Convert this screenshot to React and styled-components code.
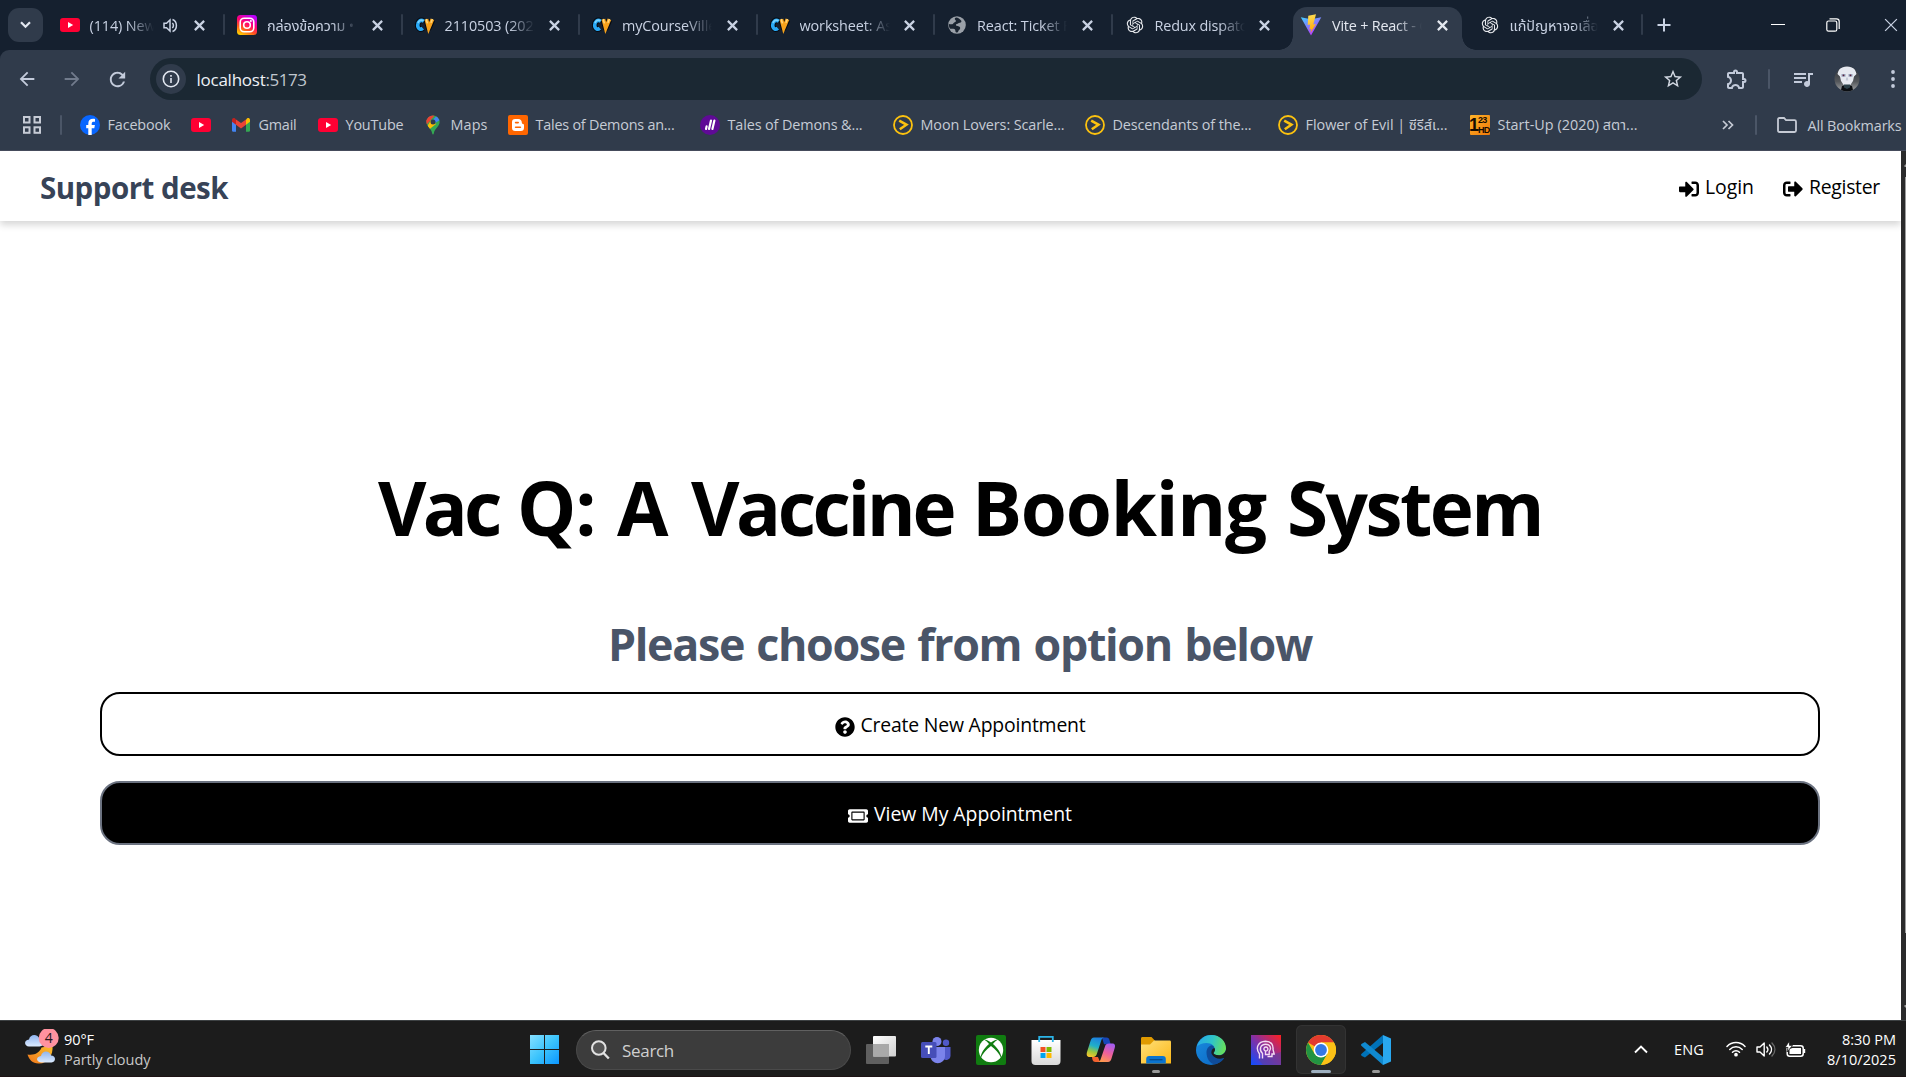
import React, { useLayoutEffect, useRef, useState } from "react";
import styled, { createGlobalStyle, css } from "styled-components";
import { FaSignInAlt, FaSignOutAlt, FaQuestionCircle, FaTicketAlt } from "react-icons/fa";
import { RiOpenaiFill } from "react-icons/ri";
import { MdQueueMusic, MdOutlineExtension, MdStarBorder, MdRefresh, MdArrowBack, MdArrowForward } from "react-icons/md";

const GlobalStyle = createGlobalStyle`
  * { box-sizing: border-box; }
  html, body { margin: 0; padding: 0; overflow: hidden; }
  body {
    font-family: "Segoe UI", "Open Sans", "Noto Sans", "Noto Sans Thai", sans-serif;
    background: #fff;
  }
  svg { display: block; flex: none; }
`;

const Screen = styled.div`
  width: 1906px;
  height: 1077px;
  display: flex;
  flex-direction: column;
  overflow: hidden;
`;

/* ---------- text that spreads to a known width ---------- */

const FitSpan = styled.span`
  display: inline-block;
  white-space: pre;
  flex: none;
`;

function Fit({ width, children, className }) {
  const ref = useRef(null);
  const [spacing, setSpacing] = useState(0);
  useLayoutEffect(() => {
    const natural = ref.current.getBoundingClientRect().width;
    setSpacing((width - natural) / String(children).length);
  }, [width, children]);
  return (
    <FitSpan ref={ref} className={className} style={{ letterSpacing: `${spacing}px` }}>
      {children}
    </FitSpan>
  );
}

/* ---------- tab strip ---------- */

const TabStrip = styled.div`
  height: 50px;
  flex: none;
  display: flex;
  align-items: stretch;
  background: #15202f;
  color: #c9d2e3;
`;

const TabSearch = styled.div`
  width: 35px;
  height: 34px;
  margin: 8px 3.5px 0 8px;
  border-radius: 11px;
  background: #303b4b;
  display: flex;
  align-items: center;
  justify-content: center;
`;

const TabBox = styled.div`
  position: relative;
  width: ${(p) => (p.$last ? 175.5 : 177.5)}px;
  flex: none;
  padding-left: 13px;
  display: flex;
  align-items: center;
  isolation: isolate;
  ${(p) =>
    p.$line &&
    css`
      &::after {
        content: "";
        position: absolute;
        right: -1px;
        top: 14px;
        width: 2px;
        height: 21px;
        border-radius: 1px;
        background: #303b4b;
      }
    `}
  ${(p) =>
    p.$active &&
    css`
      padding-left: 12px;
      color: #e4e8f0;
    `}
`;

const ActiveShape = styled.div`
  position: absolute;
  z-index: -1;
  left: 3.5px;
  right: 4.5px;
  top: 7px;
  bottom: 0;
  border-radius: 14px 14px 0 0;
  background: #303b4b;
  &::before,
  &::after {
    content: "";
    position: absolute;
    bottom: 0;
    width: 14px;
    height: 14px;
  }
  &::before {
    left: -14px;
    background: radial-gradient(circle at 0 0, transparent 13.5px, #303b4b 14px);
  }
  &::after {
    right: -14px;
    background: radial-gradient(circle at 100% 0, transparent 13.5px, #303b4b 14px);
  }
`;

const IconSlot = styled.span`
  width: 20px;
  height: 20px;
  flex: none;
  display: flex;
  align-items: center;
  justify-content: center;
`;

const TabTitle = styled.span`
  width: ${(p) => p.$w}px;
  margin-left: ${(p) => (p.$active ? 11 : 10)}px;
  padding-top: 1px;
  flex: none;
  overflow: hidden;
  white-space: nowrap;
  font-size: 14.4px;
  line-height: 26px;
  letter-spacing: ${(p) => p.$ls || 0}px;
  mask-image: linear-gradient(90deg, #000 calc(100% - 26px), transparent);
`;

const TabClose = styled.span`
  width: 16px;
  margin-left: 12px;
  display: flex;
  justify-content: center;
`;

const NewTab = styled.div`
  width: 44px;
  display: flex;
  align-items: center;
  justify-content: center;
`;

const WindowButtons = styled.div`
  margin-left: auto;
  padding-right: 8px;
  display: flex;
  align-items: center;
`;

/* ---------- toolbar ---------- */

const Chrome = styled.div`
  height: 101px;
  flex: none;
  background: #15202f;
`;

const ChromePanel = styled.div`
  height: 101px;
  border-radius: 9px 0 0 0;
  background: #303b4b;
  border-bottom: 1px solid #454b5b;
`;

const Toolbar = styled.div`
  height: 58px;
  display: flex;
  align-items: center;
  color: #c3cbdb;
`;

const NavButton = styled.span`
  width: 45px;
  display: flex;
  justify-content: center;
  color: ${(p) => (p.$dim ? "#717b8c" : "#c3cbdb")};
`;

const Omnibox = styled.div`
  width: 1552px;
  height: 42px;
  margin-left: 10.5px;
  padding: 0 18px 0 6px;
  border-radius: 21px;
  background: #1b2833;
  display: flex;
  align-items: center;
`;

const InfoDot = styled.span`
  width: 30px;
  height: 30px;
  border-radius: 50%;
  background: #303b4b;
  display: flex;
  align-items: center;
  justify-content: center;
`;

const Url = styled.div`
  margin-left: 10.5px;
  padding-top: 1px;
  flex: 1;
  display: flex;
  font-size: 17px;
  line-height: 28px;
  color: #c0c7cf;
`;

const UrlHost = styled(Fit)`
  color: #eef1f6;
`;

const Gap = styled.span`
  width: ${(p) => p.$w}px;
  flex: none;
`;

const Rule = styled.span`
  width: 2px;
  height: 20px;
  flex: none;
  border-radius: 1px;
  background: #4b5667;
`;

/* ---------- bookmarks ---------- */

const Bookmarks = styled.div`
  height: 34px;
  padding-left: 22px;
  display: flex;
  align-items: center;
  color: #c6cbd5;
  font-size: 14.4px;
`;

const Bookmark = styled.div`
  width: ${(p) => p.$w}px;
  flex: none;
  display: flex;
  align-items: center;
  gap: 7.5px;
  line-height: 26px;
`;

/* ---------- web page ---------- */

const Viewport = styled.div`
  height: 869px;
  flex: none;
  display: flex;
`;

const Page = styled.div`
  width: 1901px;
  flex: none;
  display: flex;
  flex-direction: column;
  background: #fff;
  overflow: hidden;
`;

const ScrollTrack = styled.div`
  width: 5px;
  flex: none;
  padding-left: 3px;
  display: flex;
  flex-direction: column;
  background: #2b2b2c;
  overflow: hidden;
`;

const ScrollArrow = styled.div`
  height: ${(p) => p.$h}px;
  padding-top: ${(p) => p.$top}px;
`;

const ScrollThumb = styled.div`
  height: 756px;
  margin-left: 1px;
  background: #9d9d9d;
`;

const SiteHeader = styled.header`
  height: 70px;
  flex: none;
  padding: 0 21px 0 40px;
  display: flex;
  align-items: center;
  justify-content: space-between;
  box-shadow: 0 4px 7px rgba(0, 0, 0, 0.16);
`;

const Brand = styled(Fit)`
  font-size: 29.5px;
  font-weight: 700;
  line-height: 40px;
  color: #374357;
  padding-top: 3px;
`;

const Nav = styled.nav`
  display: flex;
  gap: 29px;
  color: #000;
`;

const NavLink = styled.a`
  display: flex;
  align-items: center;
  gap: 6px;
  font-size: 19.4px;
  line-height: 30px;
  padding-top: 2px;
  svg {
    margin-top: 4px;
  }
`;

const Hero = styled.main`
  flex: 1;
  padding: 238px 81px 0 100px;
  display: flex;
  flex-direction: column;
  align-items: center;
`;

const Title = styled.h1`
  margin: 0;
  display: flex;
  font-size: 74.6px;
  line-height: 96px;
  font-weight: 700;
  word-spacing: 3px;
  color: #000;
  height: 96px;
`;

const Subtitle = styled.h2`
  margin: 59px 0 0;
  height: 60px;
  font-size: 44.8px;
  line-height: 60px;
  font-weight: 700;
  word-spacing: 2px;
  color: #4a5568;
`;

const ActionButton = styled.button`
  width: 1720px;
  height: 64px;
  flex: none;
  margin: ${(p) => p.$top}px 0 0;
  padding: 2px 0 0;
  border: 2px solid ${(p) => (p.$solid ? "#6b7280" : "#000")};
  border-radius: 20px;
  background: ${(p) => (p.$solid ? "#000" : "#fff")};
  color: ${(p) => (p.$solid ? "#fff" : "#000")};
  font-family: inherit;
  font-size: 19.4px;
  line-height: 30px;
  display: flex;
  align-items: center;
  justify-content: center;
  gap: 6px;
  svg {
    margin-top: 3px;
  }
`;

/* ---------- taskbar ---------- */

const Taskbar = styled.div`
  height: 57px;
  flex: none;
  border-top: 1px solid #3d4143;
  border-bottom: 1px solid #1d1214;
  background: #1c1c1c;
  color: #fff;
  display: flex;
  align-items: stretch;
`;

const Weather = styled.div`
  width: 530px;
  padding: 8px 0 0 24px;
  display: flex;
  gap: 5px;
`;

const TwoLines = styled.div`
  display: flex;
  flex-direction: column;
  align-items: ${(p) => (p.$end ? "flex-end" : "flex-start")};
  font-size: 14.5px;
  line-height: 20px;
  padding-top: 1px;
`;

const Muted = styled(Fit)`
  color: #c8c8c8;
`;

const StartSlot = styled.div`
  width: 46px;
  padding-top: 2px;
  display: flex;
  align-items: center;
`;

const SearchBox = styled.div`
  width: 275px;
  height: 40px;
  margin: 9px 15px 0 0;
  padding-left: 14px;
  border-radius: 20px;
  border: 1px solid #4a4a4a;
  border-top-color: #606060;
  background: #3c3c3c;
  color: #d0d0d0;
  display: flex;
  align-items: center;
  gap: 12px;
  font-size: 17px;
`;

const Apps = styled.div`
  display: flex;
  gap: 5px;
  margin-left: -10px;
`;

const AppSlot = styled.div`
  width: 50px;
  height: 49px;
  margin-top: 4px;
  padding-top: 10px;
  border-radius: 6px;
  display: flex;
  flex-direction: column;
  align-items: center;
  gap: 5px;
  ${(p) =>
    p.$active &&
    css`
      background: #292929;
      box-shadow: inset 0 0 0 1px #333;
    `}
`;

const RunMark = styled.span`
  width: ${(p) => (p.$wide ? 20 : 8)}px;
  height: 3px;
  border-radius: 2px;
  background: ${(p) => (p.$wide ? "#9fb0c0" : "#989898")};
`;

const Tray = styled.div`
  margin-left: auto;
  padding: 1px 10px 0 0;
  display: flex;
  align-items: center;
  font-size: 14.5px;
`;

/* ---------- drawings ---------- */

const Cross = ({ s = 10, w = 2 }) => (
  <svg width={s} height={s} viewBox="0 0 10 10" stroke="currentColor" strokeWidth={w} fill="none">
    <path d="M.8.8 9.2 9.2M9.2.8.8 9.2" />
  </svg>
);

const YouTube = () => (
  <svg width="20" height="20" viewBox="0 0 20 20">
    <rect y="3" width="20" height="14" rx="3" fill="#ff0033" />
    <path d="M8 7v6l5.2-3z" fill="#fff" />
  </svg>
);

const Instagram = () => (
  <svg width="20" height="20" viewBox="0 0 20 20">
    <defs>
      <linearGradient id="ig" x1=".2" y1="1" x2=".7" y2="0">
        <stop offset="0" stopColor="#ffd000" />
        <stop offset=".3" stopColor="#ff5b1a" />
        <stop offset=".6" stopColor="#ff0076" />
        <stop offset="1" stopColor="#b800ff" />
      </linearGradient>
    </defs>
    <rect width="20" height="20" rx="3.5" fill="url(#ig)" />
    <g fill="none" stroke="#fff" strokeWidth="1.6">
      <rect x="3.2" y="3.2" width="13.6" height="13.6" rx="4" />
      <circle cx="10" cy="10" r="3.3" />
    </g>
    <circle cx="13.9" cy="6.1" r="1" fill="#fff" />
  </svg>
);

const CourseVille = () => (
  <svg width="20" height="20" viewBox="0 0 20 20" fill="none">
    <g stroke="#05090f" strokeWidth="5.6" strokeLinejoin="round">
      <path d="M8.8 6.2C5.4 3.8 2.6 7 2.7 10.3c.1 3.6 3 4.8 5.1 2.8" />
      <path d="m11.4 5 2.3 8.3L17.4 5" />
    </g>
    <path d="M8.8 6.2C5.4 3.8 2.6 7 2.7 10.3c.1 3.6 3 4.8 5.1 2.8" stroke="#29a8f5" strokeWidth="3.6" />
    <path d="M8.5 5.9C5.6 4.1 3.8 5.8 3 8" stroke="#7ad4ff" strokeWidth="1.6" />
    <path d="m11.4 4.2 2.3 8.8 3.7-8.8" stroke="#f6a21c" strokeWidth="3.8" />
    <path d="m11.2 4 1.2 4.4M17.4 4l-1.5 3.8" stroke="#ffd67a" strokeWidth="1.6" />
  </svg>
);

const Globe = () => (
  <svg width="20" height="20" viewBox="0 0 20 20">
    <circle cx="10" cy="10" r="8.8" fill="#9aa0a8" />
    <path
      d="M9.2 2.4c-2 .6-1.6 2-.6 2.8.8.6.2 1.8-1.4 2.2-1 .3-.8 1.6-2 1.8-1 .2-2.2 0-3.4-.2 0 2 .4 3.4 1.3 4.7 1 .2 2.7-.3 4.2.3 1.4.6.8 2 1.4 2.9.8 1 2.3.5 2.6-.7.4-1.6 1.9-1.7 1.9-3.3 0-1.8-2-1.6-3.6-2.2-1-.4-.8-1.6.2-1.8 1.5-.3 1.6-1.2 3-1.2 1.5 0 1.8-1 1.5-1.9-1.5-2-3.2-3.2-5.1-3.4z"
      fill="#1a2431"
    />
  </svg>
);

const Vite = () => (
  <svg width="22" height="22" viewBox="0 0 22 22">
    <defs>
      <linearGradient id="va" x1="0" y1="0" x2=".6" y2="1">
        <stop offset="0" stopColor="#41d1ff" />
        <stop offset="1" stopColor="#bd34fe" />
      </linearGradient>
      <linearGradient id="vb" x1=".4" y1="0" x2=".6" y2="1">
        <stop offset="0" stopColor="#ffdf55" />
        <stop offset="1" stopColor="#ffa000" />
      </linearGradient>
    </defs>
    <path d="M.8 3.2 11 21.5 21.300 3.200 11 5.200z" fill="url(#va)" />
    <path d="M16 .3 8.300 1.700l-.6 9.200 2.500-.4-.8 5 1.900-.4-.9 4 5.600-9-2.700.4z" fill="url(#vb)" />
  </svg>
);

const Speaker = () => (
  <svg width="15" height="15" viewBox="0 0 15 15" fill="none" stroke="currentColor" strokeWidth="1.5">
    <path d="M1 5.2h2.5L7 2v11L3.5 9.8H1z" />
    <path d="M9.3 5c1.5 1.3 1.5 3.7 0 5M9.5 1.5c5.2 2 5.2 10 0 12" />
  </svg>
);

const Facebook = () => (
  <svg width="20" height="20" viewBox="0 0 20 20">
    <circle cx="10" cy="10" r="10" fill="#0866ff" />
    <path d="M8.3 19.9v-6.7H6.2V10h2.1V8.7c0-3.4 1.6-5 4.9-5 .6 0 1.4.1 1.8.2v2.8h-1.1c-1.6 0-2.2.6-2.2 2.2V10h3.2l-.6 3.2h-2.6v6.7a10 10 0 0 1-3.4 0z" fill="#fff" />
  </svg>
);

const Gmail = () => (
  <svg width="20" height="20" viewBox="0 0 20 20">
    <path d="M1 5v10.5c0 .8.5 1.2 1.2 1.2H5V8z" fill="#4285f4" />
    <path d="M19 5v10.5c0 .8-.5 1.2-1.2 1.2H15V8z" fill="#34a853" />
    <path d="M15 4.5V9.8l4-3V5c0-1.8-1.9-2.4-3-1.6z" fill="#fbbc04" />
    <path d="M5 9.8V4.4l5 3.7 5-3.7v5.4l-5 3.8z" fill="#ea4335" />
    <path d="M1 5v1.8l4 3V4.4L4 3.5C2.5 2.5 1 3.5 1 5z" fill="#c5221f" />
  </svg>
);

const Maps = () => (
  <svg width="20" height="20" viewBox="0 0 20 20">
    <defs>
      <clipPath id="pin">
        <path d="M10 .5a6.6 6.6 0 0 0-6.6 6.6c0 4.7 4.9 6.1 5.8 11.4.2 1.3 1.4 1.3 1.6 0 .9-5.3 5.8-6.7 5.8-11.4A6.6 6.6 0 0 0 10 .5z" />
      </clipPath>
    </defs>
    <g clipPath="url(#pin)">
      <rect width="20" height="20" fill="#34a853" />
      <path d="M0 14 12 0H0z" fill="#ea4335" />
      <path d="M3 13 16 -2 20 3 12 8z" fill="#4285f4" />
      <path d="M3 13.5 8 5 13 9 5.5 15z" fill="#fbbc04" />
      <path d="M0 0h8L4 8z" fill="#ea4335" />
    </g>
    <circle cx="10" cy="7.1" r="2.5" fill="#303b4b" />
  </svg>
);

const Blogger = () => (
  <svg width="20" height="20" viewBox="0 0 20 20">
    <rect width="20" height="20" rx="2" fill="#ff6600" />
    <path d="M7.2 4h3.2c2 0 3.4 1.5 3.4 3.3 0 1.3.4 1.5 1.2 1.6.7.1 1 .4 1 1v2.8A3.3 3.3 0 0 1 12.7 16H7.2A3.2 3.2 0 0 1 4 12.8V7.2A3.2 3.2 0 0 1 7.2 4z" fill="#fff" />
    <path d="M7.6 7.6h2.6M7.6 12.2h4.8" stroke="#ff6600" strokeWidth="1.6" strokeLinecap="round" />
  </svg>
);

const PurpleDisc = () => (
  <svg width="20" height="20" viewBox="0 0 20 20">
    <circle cx="10" cy="10" r="10" fill="#5f0a96" />
    <path d="m6 14 .6-2.6M9 14l2-8.5M12.4 14l2-8.5" stroke="#fff" strokeWidth="2.2" strokeLinecap="round" />
  </svg>
);

const YellowPlay = () => (
  <svg width="20" height="20" viewBox="0 0 20 20" fill="none" stroke="#fcc20f">
    <circle cx="10" cy="10" r="9" strokeWidth="1.8" />
    <path d="m6.2 5.7 7.2 4-6.6 4.6" strokeWidth="2.6" />
  </svg>
);

const HdText = styled.span`
  width: 20px;
  height: 20px;
  flex: none;
  display: grid;
  grid-template-columns: 8px 12px;
  background: linear-gradient(135deg, #ffb52a, #f07808);
  border-radius: 1px;
  color: #160b00;
  font: 900 9px/10px "Liberation Sans", sans-serif;
  letter-spacing: -0.8px;
`;

const HdOne = styled.b`
  grid-row: span 2;
  font-size: 18px;
  line-height: 20px;
  margin-left: -1px;
`;

const HdIcon = () => (
  <HdText>
    <HdOne>1</HdOne>
    <span>23</span>
    <span>HD</span>
  </HdText>
);

const AppsGrid = () => (
  <svg width="20" height="20" viewBox="0 0 20 20" fill="none" stroke="currentColor" strokeWidth="2">
    <rect x="2" y="2" width="5.5" height="5.5" />
    <rect x="12.5" y="2" width="5.5" height="5.5" />
    <rect x="2" y="12.3" width="5.5" height="5.5" />
    <rect x="12.5" y="12.3" width="5.5" height="5.5" />
  </svg>
);

const Avatar = () => (
  <svg width="26" height="26" viewBox="0 0 26 26">
    <defs>
      <clipPath id="av"><circle cx="13" cy="13" r="12.5" /></clipPath>
      <linearGradient id="avg" x1="0" y1="0" x2="0" y2="1">
        <stop offset="0" stopColor="#2c3036" />
        <stop offset=".6" stopColor="#55585c" />
        <stop offset="1" stopColor="#a9abad" />
      </linearGradient>
    </defs>
    <g clipPath="url(#av)">
      <rect width="26" height="26" fill="url(#avg)" />
      <path d="M3.500 8C5 1 9 0 13 0s8 1 9.500 8l-2.500 2.500-1 4.500-3 4.500h-6L7 15 6 10.500z" fill="#e6e9f0" />
      <path d="M7.500 8h4v2.800h-4zM14.500 8h4v2.800h-4z" fill="#9aa4bd" />
      <circle cx="9.500" cy="9.300" r=".9" fill="#5d2038" />
      <circle cx="16.500" cy="9.300" r=".9" fill="#5d2038" />
      <path d="M12.300 11.500h1.400l.6 3h-2.600z" fill="#c3c8d4" />
      <path d="M8 20c3-1.500 7-1.500 10 0l1.500 6h-13z" fill="#0a0d11" />
      <path d="M10 18.500h6v3l-3 1.500-3-1.500z" fill="#2b3f47" />
    </g>
  </svg>
);

const WeatherIcon = () => (
  <svg width="35" height="38" viewBox="0 0 35 38">
    <defs>
      <linearGradient id="cl" x1="0" y1="0" x2="0" y2="1">
        <stop offset="0" stopColor="#8fb4ee" />
        <stop offset="1" stopColor="#dcebff" />
      </linearGradient>
      <linearGradient id="mn" x1="1" y1="0" x2="0" y2="1">
        <stop offset="0" stopColor="#fbc02d" />
        <stop offset="1" stopColor="#f0761b" />
      </linearGradient>
    </defs>
    <path d="M3.5 25.5c7 1 12-1.5 14-7l11-2c1 10-5 18.500-14 18-6 0-9.500-4-11-9z" fill="url(#mn)" />
    <path d="M5 17.5c-5-.5-5.5-6.5 0-7 1-6 9-6 10.5-.5 5 0 6 7 0 7.5z" fill="url(#cl)" />
    <path d="M17 33.5c-5-.5-5.5-6 0-6.5 1-6 8.5-6 10-.5 5 0 5.5 6.5.5 7z" fill="url(#cl)" />
    <circle cx="24.7" cy="9" r="10" fill="#ff929f" clipPath="none" />
    <text x="24.7" y="14" fontSize="14" textAnchor="middle" fill="#24161a" fontFamily="Open Sans, sans-serif">4</text>
  </svg>
);

const WindowsLogo = () => (
  <svg width="29" height="29" viewBox="0 0 29 29">
    <defs>
      <linearGradient id="wl" gradientUnits="userSpaceOnUse" x1="0" y1="0" x2="29" y2="29">
        <stop offset="0" stopColor="#86e0ff" />
        <stop offset=".5" stopColor="#3cc4fc" />
        <stop offset="1" stopColor="#0b96ff" />
      </linearGradient>
    </defs>
    <path d="M0 0h14v14H0zM15 0h14v14H15zM0 15h14v14H0zM15 15h14v14H15z" fill="url(#wl)" />
  </svg>
);

const TaskView = () => (
  <svg width="30" height="30" viewBox="0 0 30 30">
    <defs>
      <linearGradient id="tv" x1="0" y1="0" x2="1" y2="1">
        <stop offset="0" stopColor="#fff" />
        <stop offset="1" stopColor="#cfcfcf" />
      </linearGradient>
    </defs>
    <rect x="0" y="9" width="23" height="20" rx="1" fill="#5f5f5f" />
    <rect x="7" y="1" width="23" height="20.5" rx="1" fill="url(#tv)" />
    <rect x="7" y="9" width="16" height="12.5" fill="#a9a9a9" />
  </svg>
);

const Teams = () => (
  <svg width="30" height="30" viewBox="0 0 30 30">
    <circle cx="16" cy="6.5" r="4.5" fill="#7b83eb" />
    <circle cx="25" cy="7.8" r="3.2" fill="#5059c9" />
    <path d="M21 12h8.5v8.5c0 5-6 5.5-8 3z" fill="#5059c9" />
    <path d="M9.5 12H24v9c0 9.5-14.5 9.5-14.5 0z" fill="#7b83eb" />
    <rect x="0" y="7" width="15.5" height="16" rx="1.5" fill="#464eb8" />
    <path d="M4.3 11.5h7M7.8 11.5V19" stroke="#fff" strokeWidth="1.9" />
  </svg>
);

const Xbox = () => (
  <svg width="30" height="30" viewBox="0 0 30 30">
    <rect width="30" height="30" rx="2" fill="#107c10" />
    <circle cx="15" cy="15" r="12.2" fill="#fff" />
    <path d="M6.5 4.5C10 4 13 6 15 7.5 17 6 20 4 23.5 4.5c-3 .3-5.500 3-6.500 4.500 4.500 4 8.500 9 8.500 15-2-5.500-6.500-10-10.500-13-4 3-8.500 7.500-10.500 13 0-6 4-11 8.500-15-1-1.500-3.500-4.200-6.500-4.500z" fill="#107c10" />
  </svg>
);

const Store = () => (
  <svg width="30" height="30" viewBox="0 0 30 30">
    <defs>
      <linearGradient id="st" x1="0" y1="0" x2="0" y2="1">
        <stop offset="0" stopColor="#fff" />
        <stop offset="1" stopColor="#d9d9d9" />
      </linearGradient>
    </defs>
    <path d="M.5 5h29v21a4 4 0 0 1-4 4h-21a4 4 0 0 1-4-4z" fill="url(#st)" />
    <path d="M8.2 7V1.8h13.6V7" fill="none" stroke="#2bb5e8" strokeWidth="1.8" />
    <path d="M9.500 12h5v5h-5z" fill="#f25022" />
    <path d="M15.500 12h5v5h-5z" fill="#7fba00" />
    <path d="M9.500 18h5v5h-5z" fill="#00a4ef" />
    <path d="M15.500 18h5v5h-5z" fill="#ffb900" />
  </svg>
);

const Copilot = () => (
  <svg width="30" height="30" viewBox="0 0 30 30">
    <defs>
      <linearGradient id="ca" x1=".6" y1="0" x2=".3" y2="1">
        <stop offset="0" stopColor="#1d7fe0" />
        <stop offset=".45" stopColor="#20b0c8" />
        <stop offset=".75" stopColor="#9cc83c" />
        <stop offset="1" stopColor="#f4c42c" />
      </linearGradient>
      <linearGradient id="cb" x1=".7" y1="0" x2=".3" y2="1">
        <stop offset="0" stopColor="#a45cf0" />
        <stop offset=".5" stopColor="#ee5f9c" />
        <stop offset="1" stopColor="#ff9a4c" />
      </linearGradient>
    </defs>
    <path d="M16 2.5h4.5c2 0 2.5 1 3 2.7l1.2 4H18z" fill="#1747b8" />
    <path d="M8 2.5h10.5c-2 0-2.8 1.5-3.4 3.5L11 18.5c-.7 2.3-1.6 3.5-4 3.5H4c-3 0-3.8-2-3-5L4.5 6C5.2 3.8 6 2.5 8 2.5z" fill="url(#ca)" />
    <path d="M14 27H9.5c-2 0-2.7-1.3-3.2-3L6 22h6z" fill="#f3622f" />
    <path d="M22 27H11.5c2 0 2.8-1.5 3.4-3.5L19 11.5C19.7 9.2 20.6 8.5 23 8.5h3c3 0 3.5 1.8 2.7 4.5L25.5 23.5c-.7 2.2-1.5 3.5-3.5 3.5z" fill="url(#cb)" />
  </svg>
);

const Explorer = () => (
  <svg width="30" height="30" viewBox="0 0 30 30">
    <defs>
      <linearGradient id="fe" x1="0" y1="0" x2="1" y2="1">
        <stop offset="0" stopColor="#ffe07a" />
        <stop offset="1" stopColor="#fcb817" />
      </linearGradient>
    </defs>
    <path d="M0 3.5C0 2.5.7 2 1.5 2h9l3 3.2V12H0z" fill="#e09a00" />
    <path d="M0 9.5h9l4-4h15.5c1 0 1.5.6 1.5 1.5v21.5H0z" fill="url(#fe)" />
    <path d="M5.2 28.5v-4.5a3 3 0 0 1 3-3h13.6a3 3 0 0 1 3 3v4.5z" fill="#0a74cf" />
    <path d="M8.5 24.7h13" stroke="#064b8c" strokeWidth="1.3" />
  </svg>
);

const Edge = () => (
  <svg width="30" height="30" viewBox="0 0 30 30">
    <defs>
      <linearGradient id="ea" x1="0" y1=".3" x2="1" y2=".5">
        <stop offset="0" stopColor="#27a9e8" />
        <stop offset=".5" stopColor="#2fc4c8" />
        <stop offset="1" stopColor="#68e05a" />
      </linearGradient>
      <linearGradient id="eb" x1="0" y1="0" x2="1" y2="1">
        <stop offset="0" stopColor="#1a8ce0" />
        <stop offset="1" stopColor="#0a64c0" />
      </linearGradient>
    </defs>
    <circle cx="15" cy="15" r="15" fill="url(#eb)" />
    <path d="M10.5 17.5c0-4 2.5-6.5 5.5-7.2 2 .7 2.8 2.3 2.8 3.7 0 2.5-1.3 3.2-1.3 4 0 1.2 2 2.2 5.2 2.2 2.5 0 4 1.5 5.3 3.3a15 15 0 0 1-8.5 5.7c-5.5.2-9-6-9-11.7z" fill="#0f4c9a" />
    <path d="M1 11.5C3 4.5 8.5 0 15.5 0 24 0 30 6.5 30 13.2c0 4.3-3.3 7-7.3 7-3.2 0-5.2-1-5.2-2.2 0-.8 1.3-1.5 1.3-4 0-3-3.2-6-8.3-6-4 0-7.5 1.5-9.5 3.5z" fill="url(#ea)" />
    <path d="M17.5 18c0 1.2 2 2.2 5.2 2.2 3.5 0 6.6-2 7.2-5.5L30.5 17c.3 2-.3 3.5-1.5 5.5-.6.8-1 .3-1.8.6-3.5 1.500-9.500.4-11.500-4.100-1-3 .5-5.500 2.800-6 .8 1.800.5 3-.3 4z" fill="#1c1c1c" />
  </svg>
);

const HeadApp = () => (
  <svg width="30" height="30" viewBox="0 0 30 30">
    <defs>
      <linearGradient id="ha" x1="0" y1="1" x2="1" y2="0">
        <stop offset="0" stopColor="#0d4dff" />
        <stop offset=".5" stopColor="#8430a4" />
        <stop offset="1" stopColor="#ff2020" />
      </linearGradient>
    </defs>
    <rect width="30" height="30" fill="url(#ha)" />
    <path d="m21 20 9-3v13H12l-5-6z" fill="#5c3f9c" opacity=".55" />
    <g fill="none" stroke="#f3dcf2" strokeWidth="1.4">
      <path d="M8.500 23.500V19C4 13 7 6.500 14.500 6.200c6 0 8 4 7.500 8.300l1.200 4.500H21v2.500h-4.500" />
      <path d="M11.500 23.500V18.500C7.500 14.500 9.500 9.300 14.700 9.200c4.800 0 6 4.300 3.500 7.300v3h-3.700v-3.500a2 2 0 1 1 .8 0" />
    </g>
  </svg>
);

const ChromeLogo = () => (
  <svg width="30" height="30" viewBox="0 0 30 30">
    <circle cx="15" cy="15" r="15" fill="#fbc116" />
    <path d="M15 15 2.01 7.5A15 15 0 0 1 28 7.5H15z" fill="#e33b2e" />
    <path d="M2.01 7.5A15 15 0 0 0 15 30l6.5-11.25L15 15 8.5 18.75z" fill="#229342" />
    <path d="M28 7.5H15v7.5l6.5 3.75L15 30A15 15 0 0 0 28 7.5z" fill="#fbc116" />
    <circle cx="15" cy="15" r="7.4" fill="#fff" />
    <circle cx="15" cy="15" r="5.9" fill="#3578e5" />
  </svg>
);

const VsCode = () => (
  <svg width="30" height="30" viewBox="0 0 30 30">
    <path d="M22 0v8L4 22.5.8 21c-1-.7-1-1.5-.2-2.3z" fill="#0072b8" />
    <path d="M22 30v-8L4 7 .8 8.7c-1 .7-1 1.5-.2 2.3z" fill="#1089cf" />
    <path d="m22 0 8 3.5v23L22 30z" fill="#29a8f0" />
  </svg>
);

const Wifi = () => (
  <svg width="20" height="16" viewBox="0 0 20 16" fill="none" stroke="#fff" strokeWidth="1.5" strokeLinecap="round">
    <path d="M1 5.5C6 .3 14 .3 19 5.5M3.8 8.5c3.5-3.6 8.9-3.6 12.4 0M6.5 11.2c2-2 5-2 7 0" />
    <circle cx="10" cy="13.7" r="1.1" fill="#fff" />
  </svg>
);

const Volume = () => (
  <svg width="20" height="17" viewBox="0 0 20 17" fill="none" stroke="#fff" strokeWidth="1.4" strokeLinecap="round">
    <path d="M1 6h3l4.2-4v13L4 11H1z" strokeLinejoin="round" />
    <path d="M10.8 6c1.3 1.5 1.3 3.5 0 5M13.5 4c2.5 2.7 2.5 6.3 0 9" />
    <path d="M16 2c3.8 4 3.8 9 0 13" stroke="#686868" />
  </svg>
);

const Battery = () => (
  <svg width="21" height="17" viewBox="0 0 21 17">
    <rect x="2.2" y="4.7" width="16" height="10.6" rx="2.5" fill="none" stroke="#fff" strokeWidth="1.5" />
    <path d="M4.5 13V8l3-1H16v6z" fill="#fff" />
    <path d="M19.2 8v4" stroke="#fff" strokeWidth="2" />
    <path d="M4.5 0 0 6.5h3L2 11l5.5-6.5H4.5z" fill="#fff" stroke="#1c1c1c" strokeWidth=".8" />
  </svg>
);

/* ---------- data ---------- */

const TABS = [
  { icon: <YouTube />, title: "(114) New", w: 64, ls: -0.1, sound: true },
  { icon: <Instagram />, title: "กล่องข้อความ •", ls: -0.15 },
  { icon: <CourseVille />, title: "2110503 (2025", ls: -0.1 },
  { icon: <CourseVille />, title: "myCourseVille", ls: -0.1 },
  { icon: <CourseVille />, title: "worksheet: Ass", ls: -0.1 },
  { icon: <Globe />, title: "React: Ticket Fe", ls: -0.1 },
  { icon: <RiOpenaiFill size={20} color="#e8eaee" />, title: "Redux dispatch", ls: -0.15, noLine: true },
  { icon: <Vite />, title: "Vite + React - G", ls: -0.2, active: true },
  { icon: <RiOpenaiFill size={20} color="#e8eaee" />, title: "แก้ปัญหาจอเลื่อน", w: 88.5, ls: 0, last: true },
];

const BOOKMARKS = [
  { icon: <Facebook />, label: "Facebook", text: 63, w: 111 },
  { icon: <YouTube />, w: 40 },
  { icon: <Gmail />, label: "Gmail", text: 38, w: 87 },
  { icon: <YouTube />, label: "YouTube", text: 58, w: 105 },
  { icon: <Maps />, label: "Maps", text: 37, w: 85 },
  { icon: <Blogger />, label: "Tales of Demons an...", text: 139, w: 192 },
  { icon: <PurpleDisc />, label: "Tales of Demons &...", text: 135, w: 193 },
  { icon: <YellowPlay />, label: "Moon Lovers: Scarle...", text: 144, w: 192 },
  { icon: <YellowPlay />, label: "Descendants of the...", text: 139, w: 193 },
  { icon: <YellowPlay />, label: "Flower of Evil | ซีรีส์เ...", text: 142, w: 192 },
  { icon: <HdIcon />, label: "Start-Up (2020) สตา...", text: 140, w: 252 },
];

const TITLE_WORDS = [
  ["Vac ", 139],
  ["Q: ", 100],
  ["A ", 74],
  ["Vaccine ", 281],
  ["Booking ", 315],
  ["System", 255],
];

const APPS = [
  { icon: <TaskView /> },
  { icon: <Teams /> },
  { icon: <Xbox /> },
  { icon: <Store /> },
  { icon: <Copilot /> },
  { icon: <Explorer />, running: true },
  { icon: <Edge /> },
  { icon: <HeadApp /> },
  { icon: <ChromeLogo />, running: true, active: true },
  { icon: <VsCode />, running: true },
];

/* ---------- sections ---------- */

function Tabs() {
  return (
    <TabStrip>
      <TabSearch>
        <svg width="11" height="8" viewBox="0 0 11 8" fill="none" stroke="#e2e7f0" strokeWidth="2.2">
          <path d="m1 1.2 4.5 4.6L10 1.2" />
        </svg>
      </TabSearch>
      {TABS.map((t, i) => (
        <TabBox key={i} $active={t.active} $last={t.last} $line={!t.active && !t.noLine}>
          {t.active && <ActiveShape />}
          <IconSlot>{t.icon}</IconSlot>
          <TabTitle $w={t.w || 90} $ls={t.ls} $active={t.active}>{t.title}</TabTitle>
          {t.sound && (
            <>
              <Gap $w={9} />
              <Speaker />
              <Gap $w={2} />
            </>
          )}
          <TabClose>
            <Cross s={11} />
          </TabClose>
        </TabBox>
      ))}
      <NewTab>
        <svg width="14" height="14" viewBox="0 0 14 14" stroke="currentColor" strokeWidth="2">
          <path d="M7 .5v13M.5 7h13" />
        </svg>
      </NewTab>
      <WindowButtons>
        <svg width="14" height="14" viewBox="0 0 14 14" stroke="#fff">
          <path d="M0 6.5h14" />
        </svg>
        <Gap $w={41} />
        <svg width="14" height="14" viewBox="0 0 14 14" fill="none" stroke="#fff" strokeWidth="1.2">
          <rect x=".8" y="3" width="10" height="10.2" rx="1.8" />
          <path d="M3.5.8h7a2.7 2.7 0 0 1 2.7 2.7V11" />
        </svg>
        <Gap $w={44} />
        <Cross s={14} w={0.9} />
      </WindowButtons>
    </TabStrip>
  );
}

function BrowserBar() {
  return (
    <Chrome>
      <ChromePanel>
        <Toolbar>
          <Gap $w={4.5} />
          <NavButton><MdArrowBack size={22} /></NavButton>
          <NavButton $dim><MdArrowForward size={22} /></NavButton>
          <NavButton><MdRefresh size={23} /></NavButton>
          <Omnibox>
            <InfoDot>
              <svg width="18" height="18" viewBox="0 0 18 18" fill="none" stroke="#e2e7f0" strokeWidth="1.6">
                <circle cx="9" cy="9" r="7.7" />
                <path d="M9 8v5M9 4.9v1.9" />
              </svg>
            </InfoDot>
            <Url>
              <UrlHost width={69}>localhost</UrlHost>
              <Fit width={41}>:5173</Fit>
            </Url>
            <MdStarBorder size={22} color="#d2d8e2" />
          </Omnibox>
          <Gap $w={23} />
          <MdOutlineExtension size={24} />
          <Gap $w={19} />
          <Rule />
          <Gap $w={21} />
          <MdQueueMusic size={24} />
          <Gap $w={19} />
          <Avatar />
          <Gap $w={30.5} />
          <svg width="4" height="18" viewBox="0 0 4 18" fill="currentColor">
            <circle cx="2" cy="2" r="1.9" />
            <circle cx="2" cy="9" r="1.9" />
            <circle cx="2" cy="16" r="1.9" />
          </svg>
        </Toolbar>
        <Bookmarks>
          <AppsGrid />
          <Gap $w={18} />
          <Rule />
          <Gap $w={18} />
          {BOOKMARKS.map((b, i) => (
            <Bookmark key={i} $w={b.w}>
              <IconSlot>{b.icon}</IconSlot>
              {b.label && <Fit width={b.text}>{b.label}</Fit>}
            </Bookmark>
          ))}
          <svg width="12" height="10" viewBox="0 0 12 10" fill="none" stroke="currentColor" strokeWidth="1.7">
            <path d="m1 1 4 4-4 4M6.5 1l4 4-4 4" />
          </svg>
          <Gap $w={21} />
          <Rule />
          <Gap $w={20} />
          <svg width="20" height="16" viewBox="0 0 20 16" fill="none" stroke="currentColor" strokeWidth="1.8">
            <path d="M1 2.5Q1 1 2.5 1H7l2 2.2h8.5Q19 3.2 19 4.7v8.8q0 1.5-1.5 1.5h-15Q1 15 1 13.5z" />
          </svg>
          <Gap $w={10.5} />
          <Fit width={94}>All Bookmarks</Fit>
        </Bookmarks>
      </ChromePanel>
    </Chrome>
  );
}

function SupportPage() {
  return (
    <Viewport>
      <Page>
        <SiteHeader>
          <Brand width={188}>Support desk</Brand>
          <Nav>
            <NavLink><FaSignInAlt size={20} /><Fit width={49}>Login</Fit></NavLink>
            <NavLink><FaSignOutAlt size={20} /><Fit width={71}>Register</Fit></NavLink>
          </Nav>
        </SiteHeader>
        <Hero>
          <Title>
            {TITLE_WORDS.map(([word, width]) => (
              <Fit key={word} width={width}>{word}</Fit>
            ))}
          </Title>
          <Subtitle><Fit width={704}>Please choose from option below</Fit></Subtitle>
          <ActionButton $top={18}>
            <FaQuestionCircle size={20} />
            <Fit width={225}>Create New Appointment</Fit>
          </ActionButton>
          <ActionButton $top={25} $solid>
            <FaTicketAlt size={20} />
            <Fit width={198}>View My Appointment</Fit>
          </ActionButton>
        </Hero>
      </Page>
      <ScrollTrack>
        <ScrollArrow $h={26} $top={11}>
          <svg width="4" height="5" viewBox="0 0 4 5"><path d="M0 4 4 0v5H1z" fill="#9d9d9d" /></svg>
        </ScrollArrow>
        <ScrollThumb />
        <ScrollArrow $h={87} $top={72}>
          <svg width="4" height="5" viewBox="0 0 4 5"><path d="M0 1 4 5V0H1z" fill="#9d9d9d" /></svg>
        </ScrollArrow>
      </ScrollTrack>
    </Viewport>
  );
}

function WindowsTaskbar() {
  return (
    <Taskbar>
      <Weather>
        <WeatherIcon />
        <TwoLines>
          <Fit width={30}>90°F</Fit>
          <Muted width={86.5}>Partly cloudy</Muted>
        </TwoLines>
      </Weather>
      <StartSlot><WindowsLogo /></StartSlot>
      <SearchBox>
        <svg width="19" height="20" viewBox="0 0 19 20" fill="none" stroke="#e2e2e2" strokeWidth="2">
          <circle cx="7.8" cy="8" r="6.8" fill="#555" />
          <path d="m12.5 13 5.3 5.5" strokeWidth="2.4" />
        </svg>
        <Fit width={52}>Search</Fit>
      </SearchBox>
      <Apps>
        {APPS.map((a, i) => (
          <AppSlot key={i} $active={a.active}>
            {a.icon}
            {a.running && <RunMark $wide={a.active} />}
          </AppSlot>
        ))}
      </Apps>
      <Tray>
        <svg width="14" height="9" viewBox="0 0 14 9" fill="none" stroke="#fff" strokeWidth="1.9">
          <path d="m1 7.5 6-6 6 6" />
        </svg>
        <Gap $w={26} />
        <Fit width={30}>ENG</Fit>
        <Gap $w={22} />
        <Wifi />
        <Gap $w={10} />
        <Volume />
        <Gap $w={9} />
        <Battery />
        <Gap $w={21} />
        <TwoLines $end>
          <Fit width={54}>8:30 PM</Fit>
          <Fit width={69}>8/10/2025</Fit>
        </TwoLines>
      </Tray>
    </Taskbar>
  );
}

export default function App() {
  return (
    <>
      <GlobalStyle />
      <Screen>
        <Tabs />
        <BrowserBar />
        <SupportPage />
        <WindowsTaskbar />
      </Screen>
    </>
  );
}
